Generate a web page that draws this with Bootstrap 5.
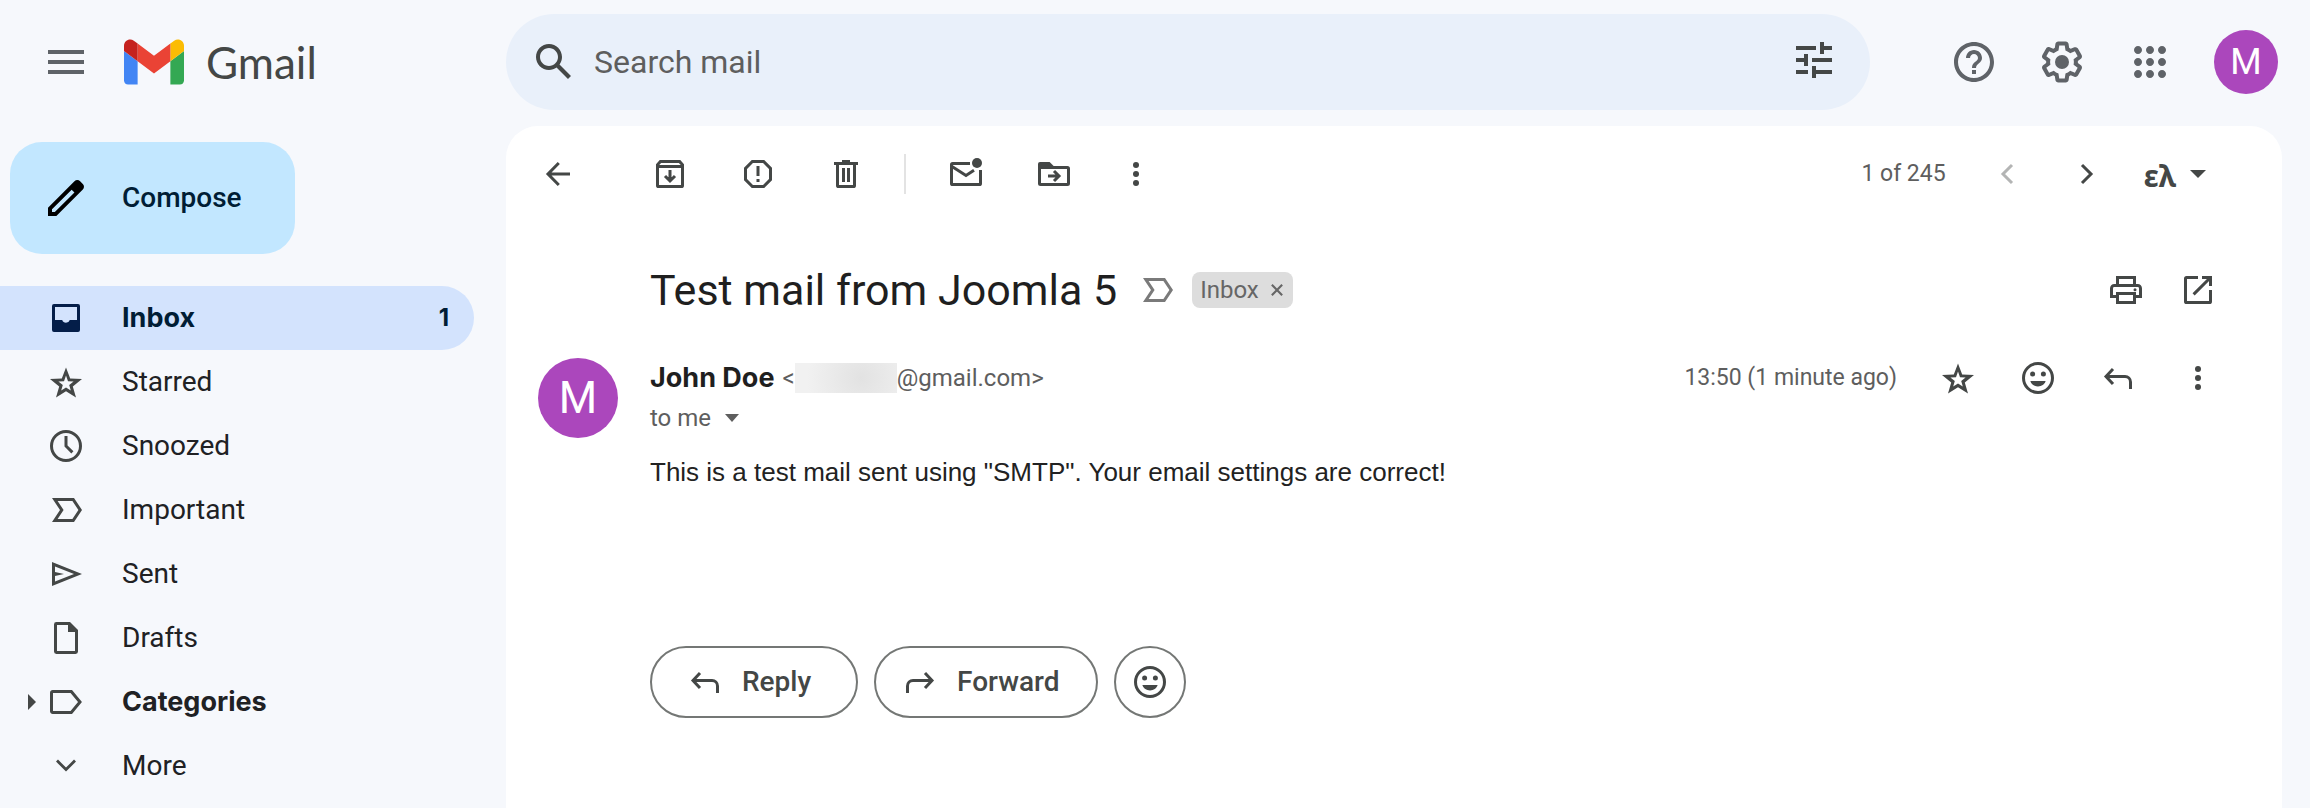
<!DOCTYPE html>
<html lang="en">
<head>
<meta charset="utf-8">
<meta name="viewport" content="width=device-width, initial-scale=1">
<title>Test mail from Joomla 5 - Gmail</title>
<link href="https://cdn.jsdelivr.net/npm/bootstrap@5.3.0/dist/css/bootstrap.min.css" rel="stylesheet">
<style>
:root { --ink: #1f1f1f; --icon: #444746; --muted: #5e5e5e; --topicon: #5f6368; }
body { background: #f6f8fc; color: var(--ink); font-family: Roboto, "Liberation Sans", sans-serif; font-size: 24px; line-height: 32px; }
svg { display: block; flex: none; fill: currentColor; }
.i20 { width: 40px; height: 40px; }
.i24 { width: 48px; height: 48px; }
.topbar { height: 126px; padding-bottom: 2px; }
.brand-area { width: 506px; padding-left: 42px; }
.brand-area .tool { color: var(--topicon); }
.brand-link { margin-left: 34px; gap: 22px; }
.brand-name { font-family: Lato, sans-serif; font-size: 44px; line-height: 48px; color: var(--icon); }
.search-box { height: 96px; background: #e9f0fa; border-radius: 48px; flex: 0 1 1364px; padding: 0 32px 0 24px; }
.search-box input { background: transparent; border: 0; font-size: 32px; color: var(--ink); outline: 0; padding: 0; }
.search-box input::placeholder { color: var(--muted); opacity: 1; }
.tool { border: 0; background: none; padding: 0; width: 88px; height: 64px; display: flex; align-items: center; justify-content: center; color: var(--icon); flex: none; }
.tool.narrow { width: 80px; }
.tool.slim { width: 64px; }
.tool.dots { width: 72px; margin-left: 2px; }
.topicons { padding-right: 32px; }
.topicons .tool { color: var(--topicon); }
.avatar { background: #ab47bc; color: #fff; border-radius: 50%; border: 0; padding: 0; display: flex; align-items: center; justify-content: center; flex: none; }
.avatar-sm { width: 64px; height: 64px; font-size: 36px; margin-left: 20px; }
.avatar-lg { width: 80px; height: 80px; font-size: 44px; }
.side { width: 506px; padding-right: 32px; }
.compose { background: #c2e7ff; color: #001d35; border: 0; border-radius: 32px; height: 112px; width: 285px; margin: 16px 0 32px 10px; padding: 0 0 0 32px; gap: 32px; font-size: 28px; font-weight: 500; }
.compose svg { color: #000; }
.folder { height: 64px; padding: 0 25px 0 26px; border-radius: 0 32px 32px 0; font-size: 28px; color: #202124; text-decoration: none; }
.folder .twisty { width: 20px; color: var(--icon); }
.folder svg.i20 { color: var(--icon); margin-right: 36px; }
.folder.current { background: #d3e3fd; color: #001d35; }
.folder.current svg.i20 { color: #041e49; }
.heavy { font-family: Inter, Roboto, sans-serif; font-weight: 700; font-size: 27px; }
.tally { font-family: Inter, Roboto, sans-serif; font-weight: 700; font-size: 24px; }
.reader { background: #fff; border-radius: 32px 32px 0 0; margin-right: 28px; }
.toolbar { height: 96px; padding: 0 44px 0 8px; }
.toolbar .back { margin-right: 24px; }
.rule { width: 2px; height: 40px; background: #e3e3e3; margin: 0 16px 0 14px; }
.count { font-size: 23px; color: var(--muted); margin-right: 21px; }
.lang { font-family: "Noto Sans", sans-serif; font-weight: 700; font-size: 30px; width: auto; gap: 14px; margin-left: 17px; padding-right: 32px; }
.subject-row { padding: 36px 44px 0 144px; }
.subject { font-size: 43px; line-height: 64px; }
.subject-row .marker { color: #7a7a7a; margin-left: 20px; }
.chip { background: #ddd; color: #666; border-radius: 8px; height: 36px; padding: 0 10px 0 8px; gap: 12px; margin-left: 15px; }
.chip button { border: 0; background: none; padding: 0; color: inherit; }
.mail { padding: 36px 44px 0 32px; }
.mail-main { padding-left: 32px; }
.who { height: 40px; }
.addr, .tome { color: var(--muted); }
.hidden-name { width: 102px; height: 30px; background: radial-gradient(circle at 65% 50%, #e2e2e2, #f1f1f1 80%); }
.when { font-size: 23px; color: var(--muted); margin-right: 21px; }
.tome { border: 0; background: none; padding: 0; height: 40px; gap: 14px; }
.mail-text { font-family: "Liberation Sans", Arial, sans-serif; font-size: 26px; line-height: 36px; color: #222; margin: 16px 0 156px; }
.answer { height: 72px; border: 2px solid #747775; border-radius: 36px; background: #fff; color: var(--icon); font-size: 28px; font-weight: 500; gap: 17px; padding: 0; }
.answer.back-to { width: 208px; padding-left: 33px; }
.answer.onward { width: 224px; padding-left: 24px; }
.answer.round { width: 72px; }
</style>
</head>
<body class="d-flex flex-column min-vh-100 overflow-hidden">
<header class="topbar d-flex align-items-center">
  <div class="brand-area d-flex align-items-center flex-shrink-0">
    <button class="tool w-auto" type="button" aria-label="Main menu"><svg class="i24" viewBox="0 0 24 24"><path d="M3 18h18v-2H3zm0-5h18v-2H3zm0-7v2h18V6z"/></svg></button>
    <a href="#" class="brand-link d-flex align-items-center text-decoration-none">
      <svg width="60" height="46" viewBox="52 42 88 66"><path fill="#4285f4" d="M58 108h14V74L52 59v43c0 3.320 2.690 6 6 6"/><path fill="#34a853" d="M120 108h14c3.320 0 6-2.690 6-6V59l-20 15"/><path fill="#fbbc04" d="M120 48v26l20-15v-8c0-7.420-8.470-11.650-14.400-7.200"/><path fill="#ea4335" d="M72 74V48l24 18 24-18v26L96 92"/><path fill="#c5221f" d="M52 51v8l20 15V48l-5.600-4.200C60.460 39.350 52 43.580 52 51"/></svg>
      <span class="brand-name">Gmail</span>
    </a>
  </div>
  <form class="search-box d-flex align-items-center" role="search">
    <button class="tool w-auto" type="button" aria-label="Search"><svg class="i24" viewBox="0 0 24 24"><path d="M20.490 19l-5.730-5.730C15.530 12.200 16 10.910 16 9.500 16 5.910 13.090 3 9.500 3S3 5.910 3 9.500 5.910 16 9.500 16c1.410 0 2.700-.47 3.770-1.240L19 20.490zM5 9.500C5 7.010 7.010 5 9.500 5S14 7.010 14 9.500 11.990 14 9.500 14 5 11.990 5 9.500"/></svg></button>
    <input class="flex-grow-1 ms-3" type="text" placeholder="Search mail" aria-label="Search mail">
    <button class="tool w-auto" type="button" aria-label="Search options"><svg class="i24" viewBox="0 0 24 24"><path d="M3 16v2h6v-2zM3 4v2h10V4zm10 16v-2h8v-2h-8v-2h-2v6zM7 8v2H3v2h4v2h2V8zm14 4v-2H11v2zm-6-4h2V6h4V4h-4V2h-2z"/></svg></button>
  </form>
  <div class="topicons d-flex align-items-center ms-auto flex-shrink-0">
    <button class="tool" type="button" aria-label="Support"><svg class="i24" viewBox="0 0 24 24"><path d="M11 18h2v-2h-2zm1-16C6.480 2 2 6.480 2 12s4.480 10 10 10 10-4.480 10-10S17.520 2 12 2m0 18c-4.410 0-8-3.590-8-8s3.590-8 8-8 8 3.590 8 8-3.590 8-8 8m0-14c-2.210 0-4 1.790-4 4h2c0-1.100.9-2 2-2s2 .9 2 2c0 2-3 1.750-3 5h2c0-2.250 3-2.500 3-5 0-2.210-1.790-4-4-4"/></svg></button>
    <button class="tool" type="button" aria-label="Settings"><svg class="i24" viewBox="0 0 24 24"><path d="M13.850 22.250h-3.700c-.74 0-1.360-.54-1.450-1.270l-.27-1.890c-.27-.14-.53-.29-.79-.46l-1.800.72c-.7.260-1.470-.03-1.810-.65L2.200 15.530c-.35-.66-.2-1.440.36-1.880l1.530-1.190c-.01-.15-.02-.3-.02-.46 0-.15.010-.31.020-.46l-1.520-1.190c-.59-.45-.74-1.260-.37-1.880l1.850-3.190c.34-.62 1.110-.9 1.790-.63l1.810.73c.26-.17.520-.32.780-.46l.27-1.910c.09-.7.710-1.250 1.440-1.250h3.700c.74 0 1.360.54 1.450 1.270l.27 1.890c.27.140.53.290.79.460l1.800-.72c.71-.26 1.480.030 1.820.65l1.840 3.180c.36.660.2 1.440-.36 1.880l-1.520 1.190c.01.15.020.30.020.460s-.01.310-.02.460l1.520 1.190c.56.450.72 1.230.37 1.860l-1.860 3.220c-.34.620-1.110.9-1.800.63l-1.800-.72c-.26.170-.52.320-.78.460l-.27 1.910c-.1.680-.72 1.220-1.460 1.220m-3.230-2h2.760l.37-2.550.53-.22c.44-.18.88-.44 1.340-.78l.45-.34 2.380.96 1.380-2.400-2.030-1.580.07-.56c.03-.26.060-.51.060-.78s-.03-.53-.06-.78l-.07-.56 2.030-1.580-1.390-2.400-2.390.96-.45-.35c-.42-.32-.87-.58-1.330-.77l-.52-.22-.37-2.550h-2.760l-.37 2.550-.53.210c-.44.190-.88.440-1.340.79l-.45.330-2.380-.95-1.390 2.390 2.030 1.580-.07.560c-.03.260-.06.530-.06.790s.02.530.06.780l.07.560-2.030 1.580 1.380 2.400 2.390-.96.450.35c.43.330.86.580 1.330.77l.53.220z"/><circle cx="12" cy="12" r="3.500"/></svg></button>
    <button class="tool" type="button" aria-label="Google apps"><svg class="i24" viewBox="0 0 24 24"><path d="M6 8c1.100 0 2-.9 2-2s-.9-2-2-2-2 .9-2 2 .9 2 2 2m6 12c1.100 0 2-.9 2-2s-.9-2-2-2-2 .9-2 2 .9 2 2 2m-6 0c1.100 0 2-.9 2-2s-.9-2-2-2-2 .9-2 2 .9 2 2 2m0-6c1.100 0 2-.9 2-2s-.9-2-2-2-2 .9-2 2 .9 2 2 2m6 0c1.100 0 2-.9 2-2s-.9-2-2-2-2 .9-2 2 .9 2 2 2m4-8c0 1.100.9 2 2 2s2-.9 2-2-.9-2-2-2-2 .9-2 2m-4 2c1.100 0 2-.9 2-2s-.9-2-2-2-2 .9-2 2 .9 2 2 2m6 6c1.100 0 2-.9 2-2s-.9-2-2-2-2 .9-2 2 .9 2 2 2m0 6c1.100 0 2-.9 2-2s-.9-2-2-2-2 .9-2 2 .9 2 2 2"/></svg></button>
    <button class="avatar avatar-sm" type="button" aria-label="Account">M</button>
  </div>
</header>

<div class="d-flex flex-grow-1">
  <aside class="side flex-shrink-0">
    <button class="compose d-flex align-items-center" type="button"><svg class="i24" viewBox="0 0 24 24"><path d="M20.410 4.940l-1.350-1.350c-.78-.78-2.050-.78-2.830 0L3 16.820V21h4.180L20.410 7.770c.79-.78.790-2.050 0-2.830m-14 14.120L5 19v-1.360l9.820-9.820 1.410 1.410z"/></svg>Compose</button>
    <nav class="d-flex flex-column">
      <a href="#" class="folder current d-flex align-items-center"><span class="twisty"></span><svg class="i20" viewBox="0 0 20 20"><path fill-rule="evenodd" d="M4 3h12a1 1 0 0 1 1 1v12a1 1 0 0 1-1 1H4a1 1 0 0 1-1-1V4a1 1 0 0 1 1-1m.5 1.500V11h3.600a2 2 0 0 0 3.800 0h3.600V4.500z"/></svg><span class="heavy flex-grow-1">Inbox</span><span class="tally">1</span></a>
      <a href="#" class="folder d-flex align-items-center"><span class="twisty"></span><svg class="i20" viewBox="0 0 20 20"><use href="#star"/></svg>Starred</a>
      <a href="#" class="folder d-flex align-items-center"><span class="twisty"></span><svg class="i20" viewBox="0 0 20 20"><path fill="none" stroke="currentColor" stroke-width="1.500" d="M10 2.750a7.250 7.250 0 1 0 0 14.500 7.250 7.250 0 1 0 0-14.500M10 5v5l3.200 3.200"/></svg>Snoozed</a>
      <a href="#" class="folder d-flex align-items-center"><span class="twisty"></span><svg class="i20" viewBox="0 0 20 20"><use href="#marker"/></svg>Important</a>
      <a href="#" class="folder d-flex align-items-center"><span class="twisty"></span><svg class="i20" viewBox="0 0 20 20"><path fill-rule="evenodd" d="M3 16V4l15 6zM4.500 13.800L14 10 4.500 6.200V9l4.500 1-4.500 1z"/></svg>Sent</a>
      <a href="#" class="folder d-flex align-items-center"><span class="twisty"></span><svg class="i20" viewBox="0 0 20 20"><path fill-rule="evenodd" d="M5.200 2H12l4 4v10.800a1.200 1.200 0 0 1-1.200 1.200H5.200A1.200 1.200 0 0 1 4 16.800V3.200A1.200 1.200 0 0 1 5.200 2m.3 1.500v13h9V7H11V3.500z"/></svg>Drafts</a>
      <a href="#" class="folder d-flex align-items-center"><span class="twisty"><svg width="12" height="16" viewBox="0 0 12 16"><path d="M2 0l8 8-8 8z"/></svg></span><svg class="i20" viewBox="0 0 20 20"><path fill="none" stroke="currentColor" stroke-width="1.500" d="M3.400 4.750h9.250L17 10l-4.350 5.250H3.400a.6.6 0 0 1-.65-.6V5.400a.6.6 0 0 1 .65-.65z"/></svg><span class="heavy">Categories</span></a>
      <a href="#" class="folder d-flex align-items-center"><span class="twisty"></span><svg class="i20" viewBox="0 0 20 20"><path fill="none" stroke="currentColor" stroke-width="1.400" d="M5.500 7.300L10 11.800l4.500-4.500"/></svg>More</a>
    </nav>
  </aside>

  <main class="reader flex-grow-1">
    <div class="toolbar d-flex align-items-center">
      <button class="tool back" type="button" aria-label="Back to Inbox"><svg class="i20" viewBox="0 0 20 20"><path fill="none" stroke="currentColor" stroke-width="1.500" d="M10.400 4.500L5 10l5.400 5.500M5 10h11"/></svg></button>
      <button class="tool" type="button" aria-label="Archive"><svg class="i20" viewBox="0 0 20 20"><path fill="none" stroke="currentColor" stroke-width="1.500" d="M3.750 6v9.700c0 .3.250.55.550.55h11.400c.3 0 .55-.25.550-.55V6M3.500 6.250h13M3.750 6.200V5.400L5.200 3.750h9.600l1.450 1.650v.8M10 8v5.300M7.500 11l2.500 2.500 2.500-2.500"/></svg></button>
      <button class="tool" type="button" aria-label="Report spam"><svg class="i20" viewBox="0 0 20 20"><path fill="none" stroke="currentColor" stroke-width="1.500" d="M7.200 3.750h5.600l3.450 3.450v5.600l-3.450 3.450H7.200L3.750 12.800V7.200zM10 6v5M10 12.500V14"/></svg></button>
      <button class="tool" type="button" aria-label="Delete"><svg class="i20" viewBox="0 0 20 20"><path fill="none" stroke="currentColor" stroke-width="1.500" d="M4 4.750h12M8 3.750h4M5.750 5v10.700c0 .3.250.55.550.55h7.400c.3 0 .55-.25.550-.55V5M8.750 7v7M11.250 7v7"/></svg></button>
      <span class="rule"></span>
      <button class="tool" type="button" aria-label="Mark as unread"><svg class="i20" viewBox="0 0 20 20"><path fill="none" stroke="currentColor" stroke-width="1.500" d="M12 4.750H3.300a.55.55 0 0 0-.55.55v9.400c0 .3.250.55.550.55h13.400c.3 0 .55-.25.550-.55V8M3 6.200l7 4.500 4-2.600"/><circle cx="15.500" cy="4.500" r="2.500"/></svg></button>
      <button class="tool" type="button" aria-label="Move to"><svg class="i20" viewBox="0 0 20 20"><path fill="none" stroke="currentColor" stroke-width="1.500" d="M2.750 6.750v8c0 .3.250.5.550.5h13.400c.3 0 .55-.2.550-.5V7.200c0-.3-.25-.5-.55-.5H2.750M7 11h5.300M10 8.500l2.500 2.500-2.500 2.500"/><path d="M2 7.500V5a1 1 0 0 1 1-1h4.800l2 2v1.500z"/></svg></button>
      <button class="tool dots" type="button" aria-label="More options"><svg class="i20" viewBox="0 0 20 20"><use href="#dots"/></svg></button>
      <span class="count ms-auto">1 of 245</span>
      <button class="tool narrow" type="button" aria-label="Newer" disabled><svg class="i20" viewBox="0 0 20 20" opacity=".4"><path fill="none" stroke="currentColor" stroke-width="1.500" d="M12.500 5.500L8 10l4.500 4.500"/></svg></button>
      <button class="tool narrow" type="button" aria-label="Older"><svg class="i20" viewBox="0 0 20 20"><path fill="none" stroke="currentColor" stroke-width="1.500" d="M7.500 5.500L12 10l-4.500 4.500"/></svg></button>
      <button class="tool lang" type="button" aria-label="Input tools"><span class="pt-1">ελ</span><svg width="16" height="8" viewBox="0 0 16 8"><path d="M0 0h16L8 8z"/></svg></button>
    </div>

    <div class="subject-row d-flex align-items-center">
      <h1 class="subject fw-normal mb-0">Test mail from Joomla 5</h1>
      <svg class="i20 marker" viewBox="0 0 20 20"><use href="#marker"/></svg>
      <span class="chip d-flex align-items-center">Inbox<button type="button" aria-label="Remove label Inbox"><svg width="12" height="12" viewBox="0 0 14 14"><path fill="none" stroke="currentColor" stroke-width="2.500" d="M1 1l12 12M13 1L1 13"/></svg></button></span>
      <button class="tool slim ms-auto" type="button" aria-label="Print"><svg class="i20" viewBox="0 0 20 20"><path fill="none" stroke="currentColor" stroke-width="1.500" d="M5.750 7.500V3.750h8.500V7.500M5.500 13.250H2.750V9.200c0-.8.600-1.450 1.400-1.450h11.700c.8 0 1.400.65 1.400 1.450v4.050H14.500M5.750 11.750h8.500v4.500h-8.500z"/><circle cx="14.500" cy="9.900" r=".75"/></svg></button>
      <button class="tool narrow" type="button" aria-label="Open in new window"><svg class="i20" viewBox="0 0 20 20"><use href="#popout"/></svg></button>
    </div>

    <article class="mail d-flex">
      <div class="avatar avatar-lg">M</div>
      <div class="mail-main flex-grow-1">
        <div class="who d-flex align-items-center">
          <span class="heavy me-2">John Doe</span>
          <span class="addr d-flex align-items-center">&lt;<span class="hidden-name"></span>@gmail.com&gt;</span>
          <span class="when ms-auto">13:50 (1 minute ago)</span>
          <button class="tool narrow" type="button" aria-label="Star"><svg class="i20" viewBox="0 0 20 20"><use href="#star"/></svg></button>
          <button class="tool narrow" type="button" aria-label="Add reaction"><svg class="i20" viewBox="0 0 20 20"><use href="#smile"/></svg></button>
          <button class="tool narrow" type="button" aria-label="Reply"><svg class="i20" viewBox="0 0 20 20"><use href="#reply"/></svg></button>
          <button class="tool narrow" type="button" aria-label="More"><svg class="i20" viewBox="0 0 20 20"><use href="#dots"/></svg></button>
        </div>
        <button class="tome d-flex align-items-center" type="button">to me<svg width="14" height="8" viewBox="0 0 14 8"><path d="M0 0h14L7 8z"/></svg></button>
        <p class="mail-text">This is a test mail sent using "SMTP". Your email settings are correct!</p>
        <div class="d-flex gap-3">
          <button class="answer back-to d-flex align-items-center" type="button"><svg class="i20" viewBox="0 0 20 20"><use href="#reply"/></svg>Reply</button>
          <button class="answer onward d-flex align-items-center" type="button"><svg class="i20" viewBox="0 0 20 20"><g transform="matrix(-1 0 0 1 20 0)"><use href="#reply"/></g></svg>Forward</button>
          <button class="answer round d-flex align-items-center justify-content-center" type="button" aria-label="Add reaction"><svg class="i20" viewBox="0 0 20 20"><use href="#smile"/></svg></button>
        </div>
      </div>
    </article>
  </main>
</div>

<svg class="d-none">
  <symbol id="star" viewBox="0 0 20 20"><path fill-rule="evenodd" d="M10 2.700l2.100 5.500 5.900.3-4.600 3.700 1.600 5.600-5-3.200-5 3.200 1.600-5.600L2 8.500l5.900-.3zm0 4.100l-1 2.800-2.800.1 2.200 1.800-.8 2.800 2.400-1.500 2.400 1.500-.8-2.800 2.200-1.800-2.800-.1z"/></symbol>
  <symbol id="marker" viewBox="0 0 20 20"><path fill-rule="evenodd" d="M3 4h11l4 6-4 6H3l4-6zm2.800 1.500l3 4.500-3 4.500h7.400l3-4.500-3-4.500z"/></symbol>
  <symbol id="dots" viewBox="0 0 20 20"><circle cx="10" cy="5.500" r="1.500"/><circle cx="10" cy="10" r="1.500"/><circle cx="10" cy="14.500" r="1.500"/></symbol>
  <symbol id="smile" viewBox="0 0 20 20"><circle cx="10" cy="10" r="7.250" fill="none" stroke="currentColor" stroke-width="1.500"/><circle cx="7.300" cy="8" r="1.250"/><circle cx="12.700" cy="8" r="1.250"/><path d="M6.200 11.500h7.600c-.5 1.700-2 2.700-3.800 2.700s-3.300-1-3.800-2.700"/></symbol>
  <symbol id="reply" viewBox="0 0 20 20"><path fill="none" stroke="currentColor" stroke-width="1.500" d="M7.500 5.500L4 9.200l3.500 3.800M4 9.250h9.500c1.500 0 2.750 1.200 2.750 2.750v3.500"/></symbol>
  <symbol id="popout" viewBox="0 0 20 20"><path fill="none" stroke="currentColor" stroke-width="1.500" d="M10 3.750H4.300a.55.55 0 0 0-.55.55v11.400c0 .3.250.55.550.55h11.400c.3 0 .55-.25.550-.55V10M12 3.750h4.250V8M16 4l-8.200 8.200"/></symbol>
</svg>
<script src="https://cdn.jsdelivr.net/npm/bootstrap@5.3.0/dist/js/bootstrap.bundle.min.js"></script>
</body>
</html>
